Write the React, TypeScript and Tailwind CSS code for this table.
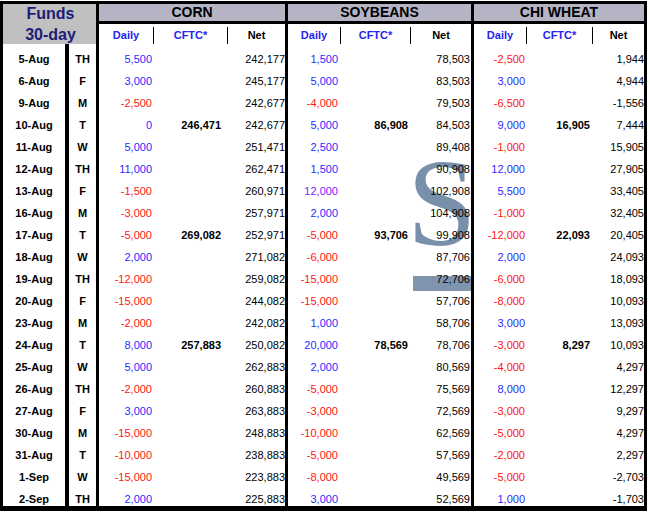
// Funds 30-day position table (corn / soybeans / chi wheat)

type Row = [string, string, string, string, string, string, string, string, string, string, string];

// date, day, corn daily, corn cftc, corn net, soy daily, soy cftc, soy net, wheat daily, wheat cftc, wheat net
const rows: Row[] = [
    ["5-Aug", "TH", "5,500", "", "242,177", "1,500", "", "78,503", "-2,500", "", "1,944"],
    ["6-Aug", "F", "3,000", "", "245,177", "5,000", "", "83,503", "3,000", "", "4,944"],
    ["9-Aug", "M", "-2,500", "", "242,677", "-4,000", "", "79,503", "-6,500", "", "-1,556"],
    ["10-Aug", "T", "0", "246,471", "242,677", "5,000", "86,908", "84,503", "9,000", "16,905", "7,444"],
    ["11-Aug", "W", "5,000", "", "251,471", "2,500", "", "89,408", "-1,000", "", "15,905"],
    ["12-Aug", "TH", "11,000", "", "262,471", "1,500", "", "90,908", "12,000", "", "27,905"],
    ["13-Aug", "F", "-1,500", "", "260,971", "12,000", "", "102,908", "5,500", "", "33,405"],
    ["16-Aug", "M", "-3,000", "", "257,971", "2,000", "", "104,908", "-1,000", "", "32,405"],
    ["17-Aug", "T", "-5,000", "269,082", "252,971", "-5,000", "93,706", "99,908", "-12,000", "22,093", "20,405"],
    ["18-Aug", "W", "2,000", "", "271,082", "-6,000", "", "87,706", "2,000", "", "24,093"],
    ["19-Aug", "TH", "-12,000", "", "259,082", "-15,000", "", "72,706", "-6,000", "", "18,093"],
    ["20-Aug", "F", "-15,000", "", "244,082", "-15,000", "", "57,706", "-8,000", "", "10,093"],
    ["23-Aug", "M", "-2,000", "", "242,082", "1,000", "", "58,706", "3,000", "", "13,093"],
    ["24-Aug", "T", "8,000", "257,883", "250,082", "20,000", "78,569", "78,706", "-3,000", "8,297", "10,093"],
    ["25-Aug", "W", "5,000", "", "262,883", "2,000", "", "80,569", "-4,000", "", "4,297"],
    ["26-Aug", "TH", "-2,000", "", "260,883", "-5,000", "", "75,569", "8,000", "", "12,297"],
    ["27-Aug", "F", "3,000", "", "263,883", "-3,000", "", "72,569", "-3,000", "", "9,297"],
    ["30-Aug", "M", "-15,000", "", "248,883", "-10,000", "", "62,569", "-5,000", "", "4,297"],
    ["31-Aug", "T", "-10,000", "", "238,883", "-5,000", "", "57,569", "-2,000", "", "2,297"],
    ["1-Sep", "W", "-15,000", "", "223,883", "-8,000", "", "49,569", "-5,000", "", "-2,703"],
    ["2-Sep", "TH", "2,000", "", "225,883", "3,000", "", "52,569", "1,000", "", "-1,703"],
];

const dailyColor = (v: string, odd?: boolean) =>
    odd ? "text-[#7a22ff]" : v.startsWith("-") ? "text-[#ff1414]" : "text-[#2a2aff]";

// Header block for one commodity
const Group = ({ title, w, cols }: { title: string; w: string; cols: string[] }) => (
    <div className={`${w} flex flex-col`}>
        <div className="h-[17px] bg-[#b4b4c4] flex items-center justify-center text-[14px] font-bold text-black">
            {title}
        </div>
        <div className="h-[3px] bg-black" />
        <div className="h-[20px] flex text-[11px] font-bold pt-[3px]">
            <div className={`${cols[0]} border-r border-black flex items-center justify-center text-[#2424f0]`}>Daily</div>
            <div className={`${cols[1]} border-r border-black flex items-center justify-center text-[#2424f0]`}>CFTC*</div>
            <div className="flex-1 flex items-center justify-center text-black">Net</div>
        </div>
    </div>
);

const Sep = ({ w }: { w: string }) => <div className={`${w} self-stretch bg-black`} />;

const DataRow = ({ r, h = "h-[22px]", purple }: { r: Row; h?: string; purple?: boolean }) => (
    <div className={`flex ${h} items-center text-[11px] text-black leading-none`}>
        <div className="w-[62px] text-center font-bold">{r[0]}</div>
        <Sep w="w-[4px]" />
        <div className="w-[27px] text-center font-bold">{r[1]}</div>
        <Sep w="w-[3px]" />
        {/* corn */}
        <div className={`w-[55px] text-right pr-[2px] ${dailyColor(r[2])}`}>{r[2]}</div>
        <div className="w-[74px] text-right pr-[7px] font-bold">{r[3]}</div>
        <div className="w-[57px] text-right">{r[4]}</div>
        <Sep w="w-[3px]" />
        {/* soybeans */}
        <div className={`w-[53px] text-right pr-[3px] ${dailyColor(r[5], purple)}`}>{r[5]}</div>
        <div className="w-[70px] text-right pr-[3px] font-bold">{r[6]}</div>
        <div className="w-[60px] text-right pr-[1px]">{r[7]}</div>
        <Sep w="w-[3px]" />
        {/* chi wheat */}
        <div className={`w-[53px] text-right pr-[2px] ${dailyColor(r[8])}`}>{r[8]}</div>
        <div className="w-[66px] text-right pr-[3px] font-bold">{r[9]}</div>
        <div className="w-[51px] text-right">{r[10]}</div>
    </div>
);

const blank: Row = ["", "", "", "", "", "", "", "", "", "", ""];

export default function App() {
    return (
        <div className="bg-white w-[650px] h-[513px] pt-[1px]" style={{ fontFamily: '"Liberation Sans", Arial, sans-serif' }}>
            <div className="w-[647px] border-black border-l-[3px] border-r-[3px] border-t-[3px] border-b-[5px]">

                {/* header */}
                <div className="flex h-[40px]">
                    <div className="w-[93px] bg-[#c0c0c0] flex flex-col items-center justify-center text-[16px] font-bold leading-[21px] text-[#1c1c7a] pl-[2px]">
                        <span>Funds</span>
                        <span>30-day</span>
                    </div>
                    <Sep w="w-[3px]" />
                    <Group title="CORN" w="w-[186px]" cols={["w-[55px]", "w-[74px]"]} />
                    <Sep w="w-[3px]" />
                    <Group title="SOYBEANS" w="w-[183px]" cols={["w-[53px]", "w-[70px]"]} />
                    <Sep w="w-[3px]" />
                    <Group title="CHI WHEAT" w="w-[170px]" cols={["w-[53px]", "w-[66px]"]} />
                </div>

                {/* body */}
                <div className="relative h-[462px] overflow-hidden">
                    {/* watermark logo */}
                    <div
                        className="absolute left-[404px] top-[97px] text-[125px] leading-none text-[#7890aa]"
                        style={{ fontFamily: '"Liberation Serif", "Times New Roman", serif' }}
                    >
                        S
                    </div>
                    <div className="absolute left-[410px] top-[232px] w-[59px] h-[15px] bg-[#7f95ae]" />

                    <div className="relative z-10">
                        <DataRow r={blank} h="h-[4px]" />
                        {rows.map((r, i) => (
                            <DataRow key={r[0]} r={r} purple={i === 6} />
                        ))}
                    </div>
                </div>
            </div>
        </div>
    );
}
